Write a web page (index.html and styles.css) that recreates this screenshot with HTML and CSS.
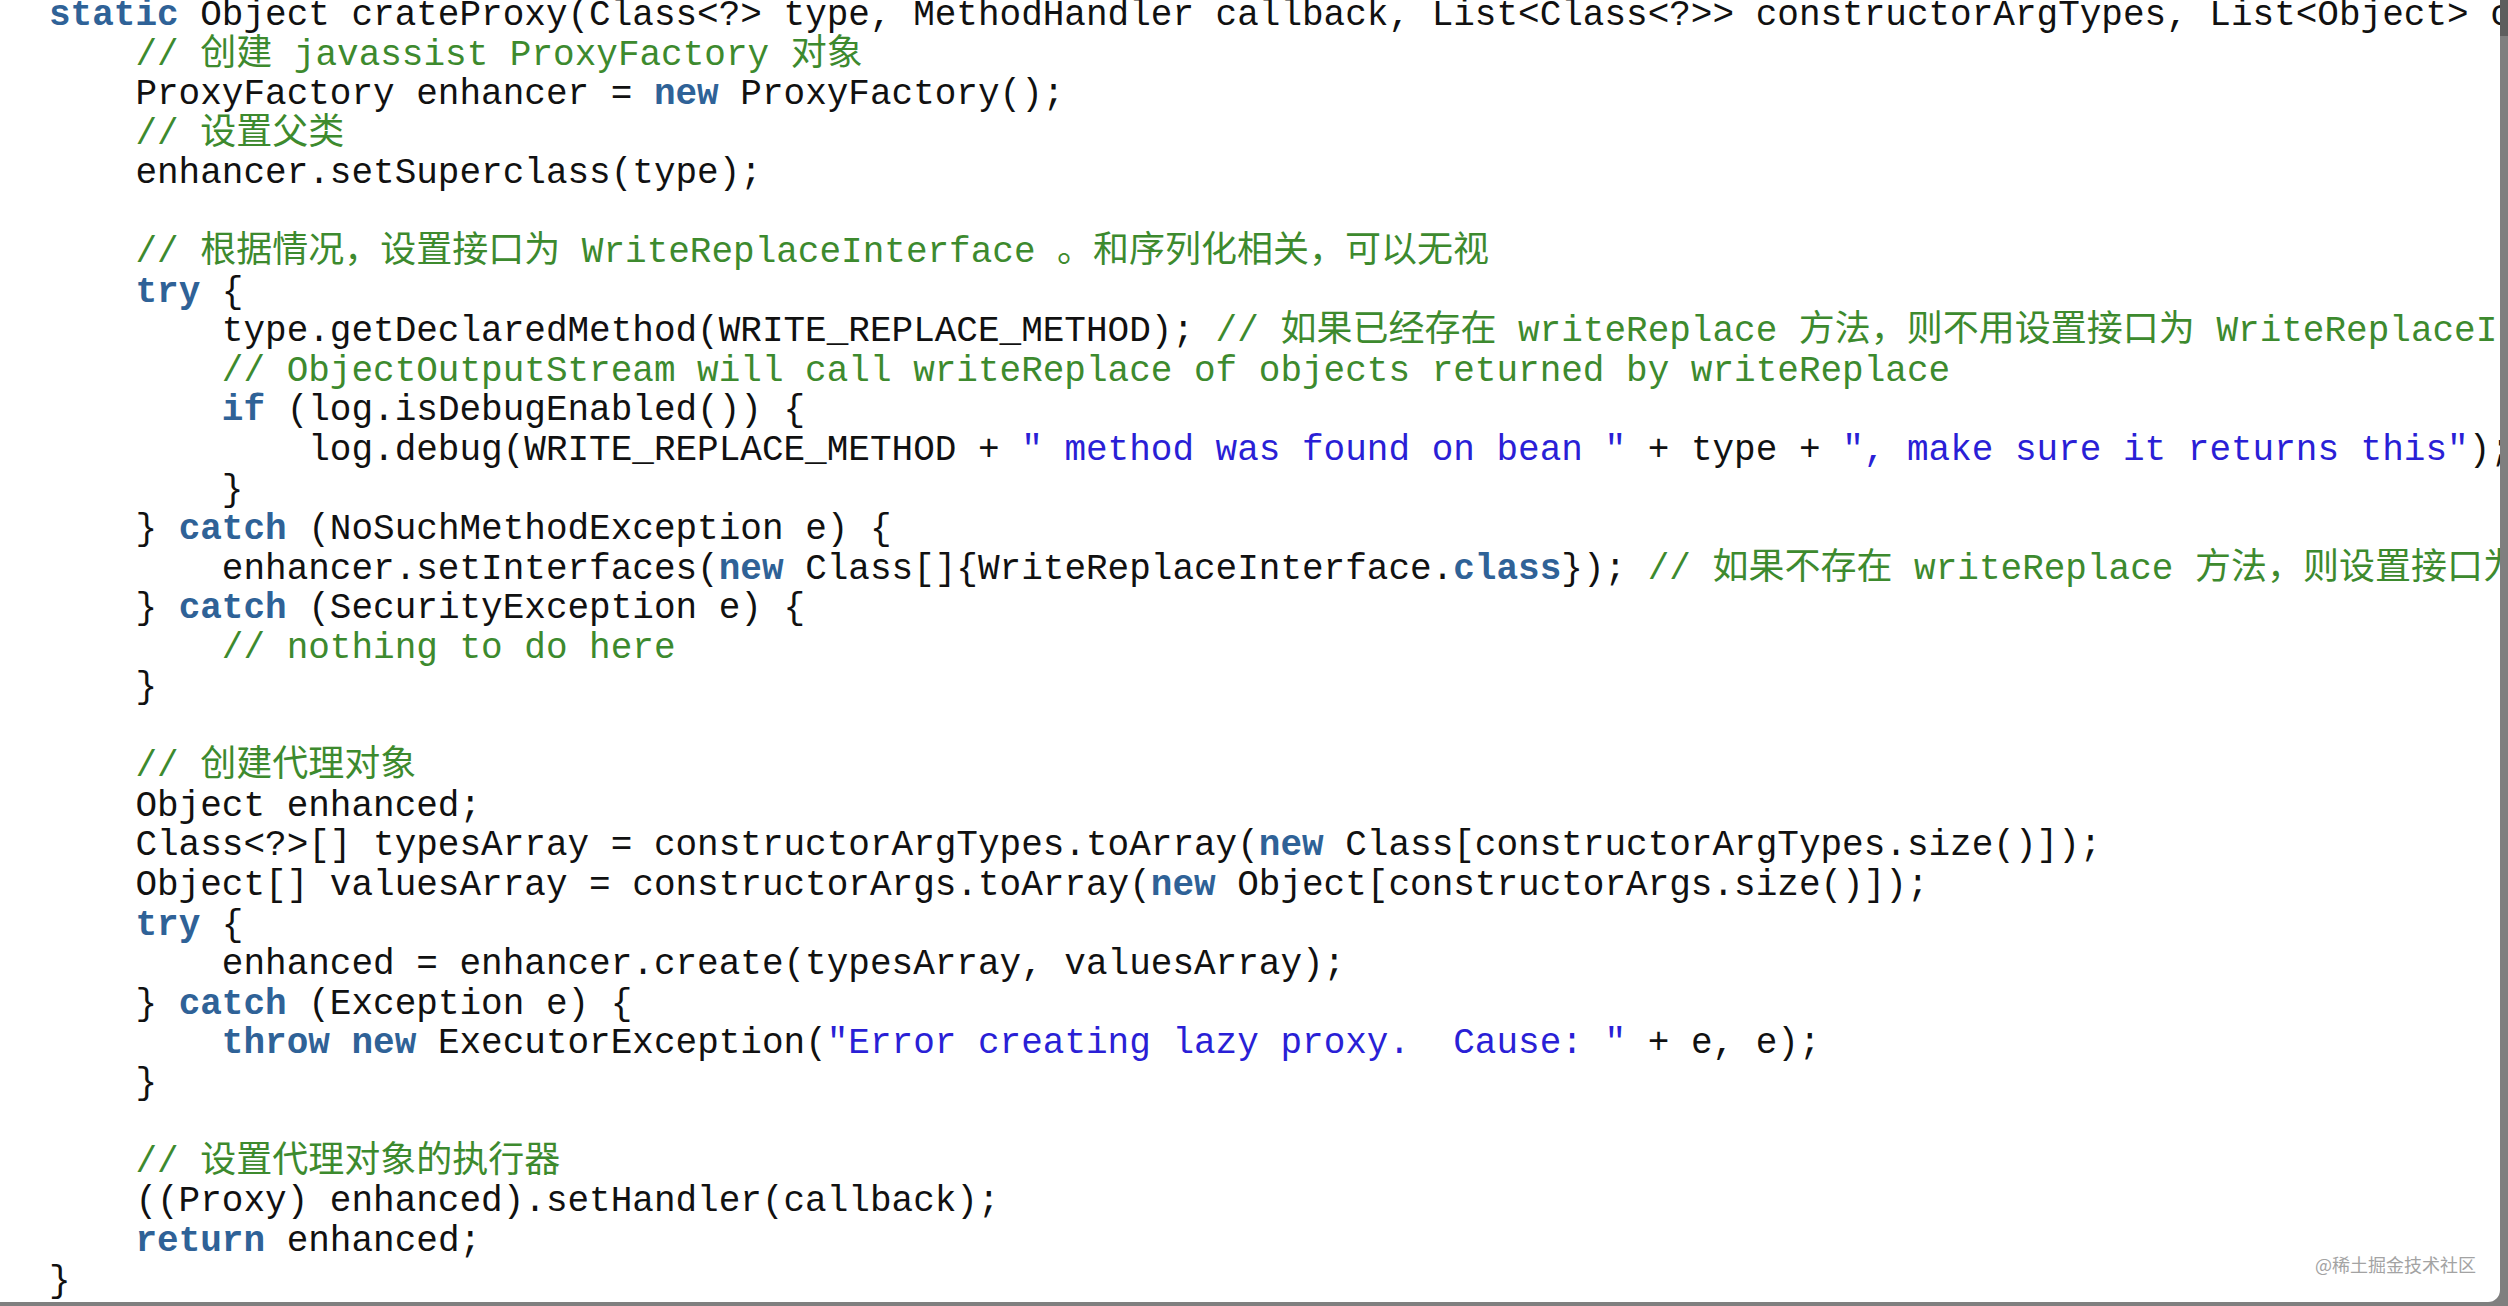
FILE: index.html
```html
<!DOCTYPE html>
<html lang="zh-CN">
<head>
<meta charset="utf-8">
<title>crateProxy</title>
<link rel="stylesheet" href="styles.css">
</head>
<body>
<div class="frame">
  <div class="panel">
    <div class="code">
<div class="ln"><span class="kw">static</span> Object crateProxy(Class&lt;?&gt; type, MethodHandler callback, List&lt;Class&lt;?&gt;&gt; constructorArgTypes, List&lt;Object&gt; constructorArgs) {</div>
<div class="ln">    <span class="cm">// 创建 javassist ProxyFactory 对象</span></div>
<div class="ln">    ProxyFactory enhancer = <span class="kw">new</span> ProxyFactory();</div>
<div class="ln">    <span class="cm">// 设置父类</span></div>
<div class="ln">    enhancer.setSuperclass(type);</div>
<div class="ln"> </div>
<div class="ln">    <span class="cm">// 根据情况，设置接口为 WriteReplaceInterface 。和序列化相关，可以无视</span></div>
<div class="ln">    <span class="kw">try</span> {</div>
<div class="ln">        type.getDeclaredMethod(WRITE_REPLACE_METHOD); <span class="cm">// 如果已经存在 writeReplace 方法，则不用设置接口为 WriteReplaceInterface</span></div>
<div class="ln">        <span class="cm">// ObjectOutputStream will call writeReplace of objects returned by writeReplace</span></div>
<div class="ln">        <span class="kw">if</span> (log.isDebugEnabled()) {</div>
<div class="ln">            log.debug(WRITE_REPLACE_METHOD + <span class="st">" method was found on bean "</span> + type + <span class="st">", make sure it returns this"</span>);</div>
<div class="ln">        }</div>
<div class="ln">    } <span class="kw">catch</span> (NoSuchMethodException e) {</div>
<div class="ln">        enhancer.setInterfaces(<span class="kw">new</span> Class[]{WriteReplaceInterface.<span class="kw">class</span>}); <span class="cm">// 如果不存在 writeReplace 方法，则设置接口为 WriteReplaceInterface</span></div>
<div class="ln">    } <span class="kw">catch</span> (SecurityException e) {</div>
<div class="ln">        <span class="cm">// nothing to do here</span></div>
<div class="ln">    }</div>
<div class="ln"> </div>
<div class="ln">    <span class="cm">// 创建代理对象</span></div>
<div class="ln">    Object enhanced;</div>
<div class="ln">    Class&lt;?&gt;[] typesArray = constructorArgTypes.toArray(<span class="kw">new</span> Class[constructorArgTypes.size()]);</div>
<div class="ln">    Object[] valuesArray = constructorArgs.toArray(<span class="kw">new</span> Object[constructorArgs.size()]);</div>
<div class="ln">    <span class="kw">try</span> {</div>
<div class="ln">        enhanced = enhancer.create(typesArray, valuesArray);</div>
<div class="ln">    } <span class="kw">catch</span> (Exception e) {</div>
<div class="ln">        <span class="kw">throw</span> <span class="kw">new</span> ExecutorException(<span class="st">"Error creating lazy proxy.  Cause: "</span> + e, e);</div>
<div class="ln">    }</div>
<div class="ln"> </div>
<div class="ln">    <span class="cm">// 设置代理对象的执行器</span></div>
<div class="ln">    ((Proxy) enhanced).setHandler(callback);</div>
<div class="ln">    <span class="kw">return</span> enhanced;</div>
<div class="ln">}</div>
    </div>
    <div class="watermark">@稀土掘金技术社区</div>
  </div>
  <div class="edge">
    <div class="edge-top"></div>
  </div>
</div>
</body>
</html>
```
FILE: styles.css
```css
html, body {
  margin: 0;
  padding: 0;
  background: #7f7f7f;
  overflow: hidden;
}

.frame {
  display: flex;
  width: 2508px;
  height: 1306px;
  background: #7f7f7f;
}

.panel {
  position: relative;
  width: 2500px;
  height: 1302px;
  background: #ffffff;
  border-bottom-right-radius: 12px;
  overflow: hidden;
  flex: none;
}

.edge {
  flex: 1;
  display: flex;
  flex-direction: column;
}

.edge-top {
  height: 36px;
  background: #5e5e5e;
}

.code {
  margin-top: -4px;
  padding-left: 49px;
  font-family: "Liberation Mono", "Noto Sans CJK SC", monospace;
  font-size: 36px;
  color: #111111;
}

.ln {
  height: 39.55px;
  line-height: 39.55px;
  white-space: pre;
}

.kw {
  font-weight: bold;
  color: #2f6297;
}

.cm {
  color: #3d8a2e;
}

.st {
  color: #2a1fd6;
}

.watermark {
  position: absolute;
  right: 24px;
  bottom: 26px;
  font-family: "Noto Sans CJK SC", sans-serif;
  font-size: 18px;
  line-height: 24px;
  color: #a3a3a3;
}
```
